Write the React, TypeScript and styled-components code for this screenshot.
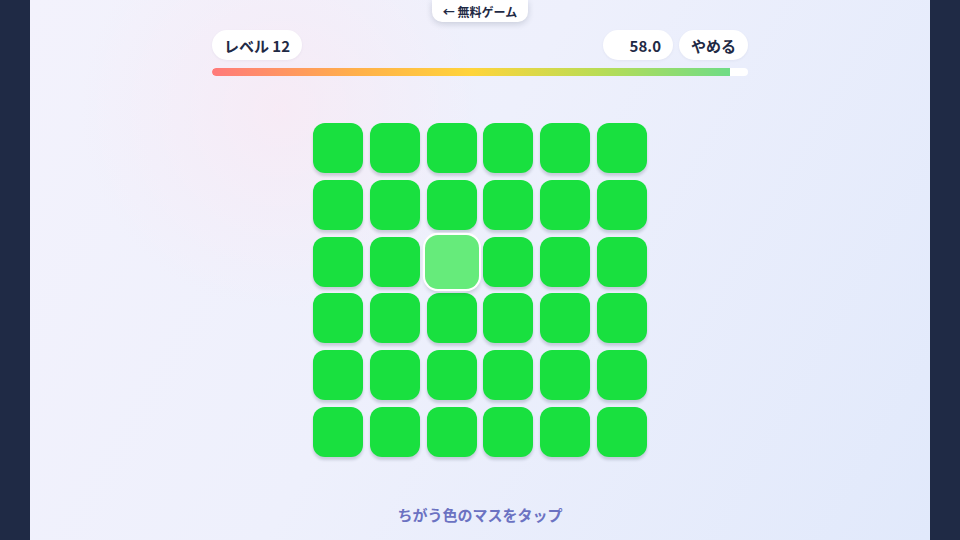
import React from "react";
import styled, { createGlobalStyle } from "styled-components";

const Global = createGlobalStyle`
  html, body { margin: 0; padding: 0; height: 100%; }
  body { background: #1f2a45; font-family: "Noto Sans CJK JP", "Noto Sans", sans-serif; }
  #root { height: 100%; }
`;

const Page = styled.div`
  height: 540px;
  display: flex;
  justify-content: center;
`;

const Stage = styled.main`
  width: 900px;
  height: 540px;
  box-sizing: border-box;
  display: flex;
  flex-direction: column;
  align-items: center;
  background:
    radial-gradient(circle at 250px 110px, rgba(255, 228, 238, 0.45) 0px, rgba(255, 230, 240, 0) 200px),
    linear-gradient(120deg, #f3f2fc 0%, #eef0fc 45%, #e1e9fb 100%);
`;

const BackButton = styled.button`
  height: 22px;
  padding: 0 11px;
  border: none;
  border-radius: 0 0 10px 10px;
  background: #ffffff;
  box-shadow: 0 2px 6px rgba(30, 42, 69, 0.18);
  font-family: inherit;
  font-size: 12px;
  font-weight: 700;
  color: #1f2a45;
  white-space: nowrap;
  display: flex;
  align-items: center;
  gap: 3px;
`;

const Header = styled.div`
  width: 536px;
  margin-top: 8px;
  height: 30px;
  display: flex;
  align-items: center;
  justify-content: space-between;
`;

const Pill = styled.div<{ $w: number; $align?: string }>`
  width: ${(p) => p.$w}px;
  height: 30px;
  box-sizing: border-box;
  padding: 0 12px;
  border-radius: 15px;
  background: #ffffff;
  display: flex;
  align-items: center;
  justify-content: ${(p) => p.$align || "center"};
  font-size: 15px;
  font-weight: 700;
  color: #1f2a45;
  white-space: nowrap;
  box-shadow: 0 1px 3px rgba(30, 42, 69, 0.05);
`;

const Right = styled.div`
  display: flex;
  gap: 6px;
`;

const Track = styled.div`
  width: 536px;
  height: 8px;
  margin-top: 8px;
  border-radius: 4px;
  background: #ffffff;
  overflow: hidden;
`;

const Fill = styled.div`
  height: 100%;
  border-radius: 4px 0 0 4px;
  background: linear-gradient(90deg, #ff7a7a 0%, #ffb04a 28%, #ffd43b 50%, #b8dc55 75%, #6fdc86 100%);
`;

const Grid = styled.div`
  margin-top: 47px;
  display: grid;
  grid-template-columns: repeat(6, 50px);
  grid-auto-rows: 50px;
  column-gap: 6.8px;
  row-gap: 6.8px;
`;

const Cell = styled.button<{ $odd?: boolean }>`
  width: 50px;
  height: 50px;
  padding: 0;
  border: none;
  border-radius: 12px;
  background: ${(p) => (p.$odd ? "#66eb7b" : "#19e03f")};
  box-shadow: ${(p) =>
    p.$odd
      ? "0 0 0 2px #ffffff, 0 3px 4px rgba(30, 42, 69, 0.2)"
      : "0 3px 3px rgba(30, 42, 69, 0.18)"};
  transform: ${(p) => (p.$odd ? "scale(1.08)" : "none")};
`;

const Hint = styled.p`
  margin: 47px 0 0;
  font-size: 15px;
  font-weight: 700;
  color: #6b72c2;
`;

export default function App() {
  const cells = Array.from({ length: 36 }, (_, i) => i);
  const odd = 2 * 6 + 2;
  return (
    <>
      <Global />
      <Page>
        <Stage>
          <BackButton>← 無料ゲーム</BackButton>
          <Header>
            <Pill $w={90}>レベル 12</Pill>
            <Right>
              <Pill $w={70} $align="flex-end">58.0</Pill>
              <Pill $w={69}>やめる</Pill>
            </Right>
          </Header>
          <Track>
            <Fill style={{ width: `${(518 / 536) * 100}%` }} />
          </Track>
          <Grid>
            {cells.map((i) => (
              <Cell key={i} $odd={i === odd} aria-label={`cell ${i}`} />
            ))}
          </Grid>
          <Hint>ちがう色のマスをタップ</Hint>
        </Stage>
      </Page>
    </>
  );
}
